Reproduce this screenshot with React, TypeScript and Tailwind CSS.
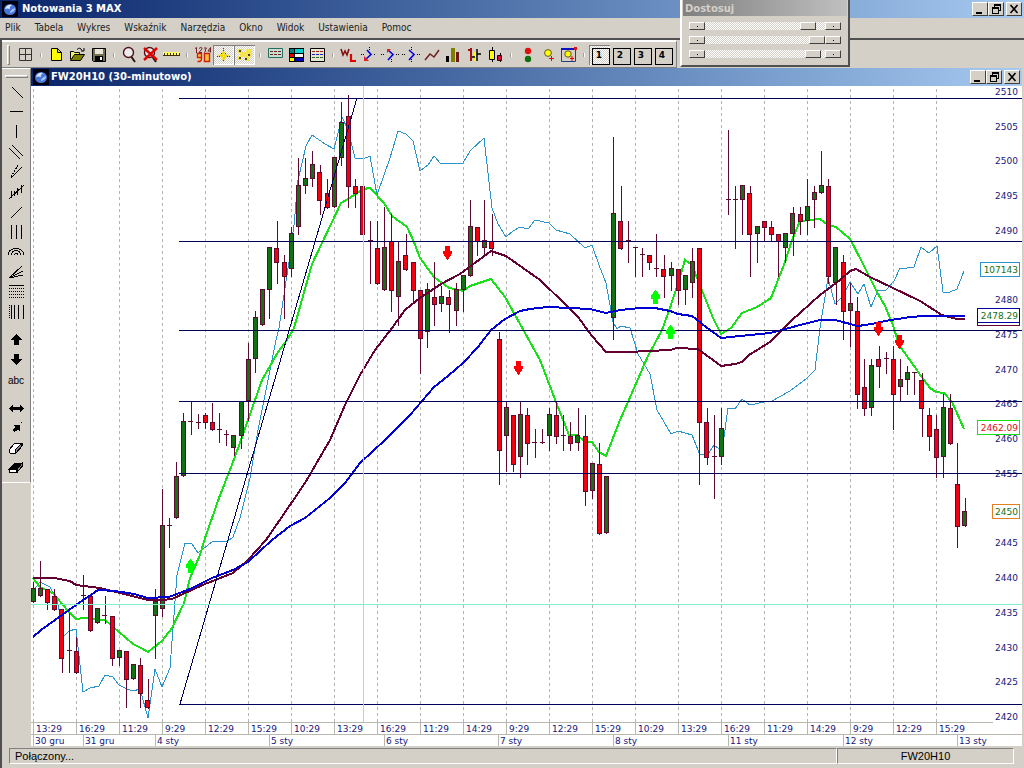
import React, { useState } from "react";

type Candle = [number, number, number, number, "u" | "d" | "-"];

// high, body top, body bottom, low, direction
const candles: Candle[] = [
  [582, 588, 602, 602, "u"], [561, 588, 596, 596, "u"], [589, 589, 603, 609, "d"], [589, 596, 610, 610, "d"],
  [609, 609, 659, 672, "d"], [613, 650, 650, 672, "-"], [637, 651, 673, 673, "d"], [575, 595, 595, 609, "-"],
  [596, 596, 631, 631, "d"], [608, 608, 623, 623, "u"], [596, 615, 615, 623, "-"], [616, 616, 659, 665, "d"],
  [650, 650, 658, 665, "u"], [651, 651, 680, 707, "d"], [664, 664, 679, 679, "u"], [658, 665, 694, 707, "d"],
  [679, 700, 708, 708, "d"], [589, 601, 616, 658, "u"], [489, 525, 609, 616, "u"], [518, 525, 525, 547, "-"],
  [462, 476, 518, 518, "u"], [413, 421, 476, 476, "u"], [401, 421, 421, 434, "-"], [414, 422, 422, 428, "-"],
  [413, 415, 423, 428, "d"], [403, 422, 430, 430, "d"], [413, 429, 429, 442, "-"], [430, 434, 434, 445, "-"],
  [435, 435, 448, 455, "u"], [401, 401, 436, 448, "u"], [343, 359, 401, 420, "u"], [311, 317, 359, 372, "u"],
  [289, 289, 325, 325, "u"], [247, 247, 290, 318, "u"], [221, 248, 263, 283, "d"], [255, 262, 277, 318, "d"],
  [227, 233, 269, 276, "u"], [158, 185, 227, 234, "u"], [158, 178, 186, 193, "u"], [151, 164, 179, 186, "u"],
  [165, 172, 201, 214, "d"], [179, 193, 208, 208, "d"], [157, 157, 207, 207, "u"], [102, 122, 158, 165, "u"],
  [95, 116, 187, 207, "d"], [179, 186, 194, 207, "d"], [172, 186, 235, 241, "d"], [221, 240, 240, 283, "-"],
  [221, 248, 284, 284, "d"], [207, 247, 290, 290, "u"], [214, 241, 291, 311, "d"], [242, 261, 297, 325, "u"],
  [234, 255, 270, 270, "d"], [262, 262, 291, 301, "d"], [290, 290, 339, 373, "d"], [283, 289, 332, 347, "u"],
  [262, 297, 305, 325, "d"], [286, 296, 304, 311, "u"], [290, 297, 305, 332, "d"], [283, 289, 311, 325, "u"],
  [275, 275, 290, 311, "u"], [200, 226, 276, 276, "u"], [227, 227, 242, 255, "d"], [200, 240, 248, 255, "u"],
  [214, 241, 249, 255, "d"], [332, 339, 451, 484, "d"], [402, 407, 436, 471, "u"], [415, 415, 465, 471, "d"],
  [402, 414, 457, 477, "u"], [408, 415, 444, 464, "d"], [429, 442, 442, 457, "-"], [429, 442, 442, 443, "-"],
  [408, 414, 436, 450, "u"], [402, 415, 437, 443, "d"], [415, 435, 435, 450, "-"], [422, 436, 444, 450, "d"],
  [408, 435, 443, 450, "u"], [415, 436, 492, 505, "d"], [463, 463, 491, 498, "u"], [443, 464, 534, 534, "d"],
  [476, 476, 533, 533, "u"], [137, 213, 318, 339, "u"], [186, 221, 249, 249, "d"], [221, 240, 240, 262, "-"],
  [247, 247, 247, 276, "-"], [248, 254, 254, 276, "-"], [255, 255, 263, 269, "d"], [234, 268, 268, 276, "-"],
  [255, 269, 277, 297, "d"], [262, 268, 276, 290, "u"], [269, 269, 291, 304, "d"], [275, 275, 290, 304, "u"],
  [248, 261, 283, 297, "u"], [248, 248, 423, 484, "d"], [408, 422, 458, 464, "d"], [415, 456, 456, 498, "-"],
  [408, 428, 457, 464, "u"], [130, 199, 199, 214, "-"], [186, 199, 199, 248, "-"], [185, 185, 200, 234, "u"],
  [186, 193, 235, 276, "d"], [226, 226, 234, 262, "u"], [221, 221, 228, 241, "d"], [221, 227, 235, 241, "d"],
  [234, 234, 242, 276, "d"], [233, 233, 248, 262, "u"], [207, 213, 234, 255, "u"], [207, 214, 222, 234, "d"],
  [179, 206, 221, 234, "u"], [186, 192, 200, 227, "u"], [151, 185, 193, 193, "u"], [179, 186, 277, 283, "d"],
  [247, 247, 283, 304, "u"], [255, 262, 312, 339, "d"], [283, 303, 311, 346, "u"], [297, 311, 395, 408, "d"],
  [359, 387, 409, 415, "d"], [359, 365, 408, 415, "u"], [346, 359, 367, 387, "d"], [352, 358, 358, 373, "-"],
  [346, 359, 395, 429, "d"], [359, 379, 387, 401, "u"], [366, 372, 380, 394, "u"], [372, 372, 372, 394, "-"],
  [373, 380, 409, 436, "d"], [408, 415, 437, 450, "d"], [415, 429, 458, 477, "d"], [394, 407, 457, 477, "u"],
  [394, 408, 444, 444, "d"], [443, 484, 527, 547, "d"], [498, 511, 526, 526, "u"],
];

const greenLine =
  "33,578 40,587 54,594 62,604 69,612 76,619 84,618 105,620 112,626 126,638 133,644 141,648 148,652 162,641 172,628 184,603 190,578 200,555 205,538 219,498 233,462 241,440 262,380 278,352 287,340 294,328 312,264 341,203 348,199 363,189 370,188 384,203 392,216 407,227 414,242 420,258 434,277 449,288 455,289 463,291 470,286 491,279 505,297 520,324 540,360 556,402 569,435 577,435 584,441 592,442 599,452 606,456 620,420 628,402 648,356 662,330 670,308 678,283 685,260 692,265 699,283 713,318 721,334 731,328 742,313 757,307 771,298 785,262 792,240 800,221 820,219 828,225 836,227 850,239 862,262 877,292 885,306 893,325 899,345 914,366 921,376 930,388 936,392 944,393 952,402 964,429";
const maroonLine =
  "33,578 54,578 70,581 76,585 100,588 148,600 162,600 172,599 205,584 233,573 248,560 266,540 290,505 305,483 330,440 345,405 360,375 375,350 392,328 405,310 420,298 441,284 460,274 491,251 506,256 540,280 565,304 578,317 592,336 606,352 628,352 670,350 677,348 698,349 721,366 735,364 742,362 749,355 770,342 792,320 800,313 820,295 840,280 850,271 856,269 870,277 893,288 920,301 942,315 957,319 965,319";
const blueLine =
  "33,637 41,630 55,620 62,615 76,605 98,590 115,591 134,594 148,598 169,597 190,589 212,578 233,570 248,562 272,540 290,526 305,518 330,498 345,483 360,463 385,440 410,415 434,387 448,376 463,363 478,347 491,330 505,319 520,311 530,309 548,307 590,309 606,313 620,310 640,308 655,308 670,311 678,314 692,316 706,327 721,338 740,336 770,333 778,331 800,325 820,320 835,320 858,326 872,324 885,321 910,317 925,316 965,316";
const volumeLine =
  "34,590 40,582 50,587 57,600 64,636 69,631 76,629 83,692 90,688 99,686 105,675 113,677 119,685 127,689 133,691 140,689 148,718 155,669 162,687 170,668 177,575 185,543 192,544 198,553 213,541 228,541 233,537 240,518 250,478 258,430 268,380 276,340 279,328 290,255 294,225 298,180 306,146 312,135 325,144 334,149 342,117 348,130 355,158 363,159 370,156 377,195 390,158 398,131 406,134 413,141 420,171 428,165 434,156 441,164 463,163 470,151 484,138 492,208 498,224 506,237 513,231 520,227 528,229 535,220 549,223 556,230 570,234 585,248 592,245 599,265 606,283 613,322 617,329 621,326 630,328 638,354 650,374 657,410 671,434 678,431 692,435 700,455 708,454 714,445 722,451 724,437 728,408 735,409 742,399 750,405 764,402 772,401 790,391 807,378 815,370 820,328 828,278 835,304 843,296 850,282 858,294 864,284 871,307 878,290 886,290 894,281 900,268 907,268 914,267 921,247 929,253 937,246 943,292 950,292 957,289 964,271";

const times = [
  "13:29", "16:29", "11:29", "9:29", "12:29", "15:29", "10:29", "13:29", "16:29", "11:29", "14:29",
  "9:29", "12:29", "15:29", "10:29", "13:29", "16:29", "11:29", "14:29", "9:29", "12:29", "15:29",
];

const dates = [
  { x: 33, label: "30 gru" },
  { x: 83, label: "31 gru" },
  { x: 155, label: "4 sty" },
  { x: 269, label: "5 sty" },
  { x: 384, label: "6 sty" },
  { x: 498, label: "7 sty" },
  { x: 613, label: "8 sty" },
  { x: 728, label: "11 sty" },
  { x: 843, label: "12 sty" },
  { x: 957, label: "13 sty" },
];

const lastPrice = 2450;
const prices = Array.from({ length: 19 }, (_, i) => 2510 - i * 5);
const levels = [98, 241, 330, 401, 473, 704];

const marks = [
  { x: 190, y: 559, up: true },
  { x: 655, y: 290, up: true },
  { x: 670, y: 325, up: true },
  { x: 447, y: 246, up: false },
  { x: 518, y: 361, up: false },
  { x: 878, y: 322, up: false },
  { x: 899, y: 335, up: false },
];

const PriceTag = ({ x, y, border, color, text }: { x: number; y: number; border: string; color: string; text: string }) => (
  <g>
    <rect x={x + 0.5} y={y + 0.5} width={1019 - x} height={14} fill="#fff" stroke={border} />
    <text x={1018} y={y + 11} textAnchor="end" fill={color}>
      {text}
    </text>
  </g>
);

const Chart = () => (
  <svg
    viewBox="31 86 991 660"
    className="block w-full bg-white font-['DejaVu_Sans',sans-serif] text-[9px]"
    shapeRendering="crispEdges"
    role="img"
    aria-label="FW20H10"
  >
    {/* time grid */}
    {times.map((t, i) => (
      <g key={i}>
        <line x1={33.5 + i * 43} x2={33.5 + i * 43} y1="89" y2="722" stroke="#b4b4b4" strokeDasharray="3 3" />
        <line x1={33.5 + i * 43} x2={33.5 + i * 43} y1="722" y2="734" stroke="#b8b8b0" />
        <text x={36 + i * 43} y="732" fill="#16167c">
          {t}
        </text>
      </g>
    ))}
    <path d="M31 722.5H993M31 734.5H1022" stroke="#b8b8b0" />
    {dates.map((d) => (
      <g key={d.label}>
        <line x1={d.x + 0.5} x2={d.x + 0.5} y1="734" y2="746" stroke="#b8b8b0" />
        <text x={d.x + 2} y="744" fill="#16167c">
          {d.label}
        </text>
      </g>
    ))}

    {/* price scale, the last price has its own tag */}
    {prices.map(
      (p, i) =>
        p !== lastPrice && (
          <text key={p} x="1018" y={95 + Math.round(i * 34.72)} textAnchor="end" fill="#16167c">
            {p}
          </text>
        )
    )}

    <polyline points={volumeLine} fill="none" stroke="#2b93cc" />
    <polyline points={greenLine} fill="none" stroke="#16e016" strokeWidth="2" />

    {/* candles */}
    {candles.map(([high, top, bottom, low, dir], i) => {
      const step = (i * 43) / 6;
      const wick = Math.floor(33.4 + step);
      const body = Math.floor(31.3 + step);
      return (
        <g key={i}>
          <rect x={wick} y={high} width="1" height={low - high + 1} fill="#5c0a30" />
          {dir === "-" ? (
            <rect x={body} y={top} width="5" height="1" fill="#5c0a30" />
          ) : (
            <>
              <rect x={body} y={top} width="5" height={bottom - top} fill="#5c0a30" />
              <rect x={body + 1} y={top + 1} width="3" height={bottom - top - 2} fill={dir === "u" ? "#147014" : "#f00010"} />
            </>
          )}
        </g>
      );
    })}

    <polyline points={maroonLine} fill="none" stroke="#640032" strokeWidth="2" />
    <polyline points={blueLine} fill="none" stroke="#0000d0" strokeWidth="2" />

    {/* support levels and trend */}
    {levels.map((y) => (
      <rect key={y} x="179" y={y} width="843" height="1" fill="#00005a" />
    ))}
    <line x1="180" y1="704" x2="357" y2="98" stroke="#00005a" />

    {/* crosshair */}
    <rect x="363" y="86" width="1" height="636" fill="#7ff0cc" />
    <rect x="31" y="604" width="991" height="1" fill="#7ff0cc" />

    {marks.map((m) => (
      <path
        key={m.x}
        transform={`translate(${m.x} ${m.y})`}
        d={m.up ? "M0 0H1L5 6V9H3V14H-2V9H-4V6Z" : "M-2 0H3V5H5V7L1 14H0L-4 7V5H-2Z"}
        fill={m.up ? "#00ff00" : "#ff0000"}
      />
    ))}

    <rect x="977.5" y="308.5" width="42" height="17" fill="#fff" stroke="#640032" />
    <PriceTag x={977} y={308} border="#0000a0" color="#147014" text="2478.29" />
    <PriceTag x={980} y={262} border="#2b93cc" color="#147014" text="107143" />
    <PriceTag x={977} y={420} border="#16e016" color="#e01010" text="2462.09" />
    <PriceTag x={992} y={504} border="#e08020" color="#147014" text={String(lastPrice)} />
  </svg>
);

const Logo = () => (
  <svg viewBox="0 0 16 16" className="size-4 shrink-0">
    <rect width="16" height="16" fill="#000010" />
    <ellipse cx="8" cy="8.5" rx="6" ry="5.5" fill="#4a78d8" />
    <path d="M3 8Q5 3 10 4Q7 6 8 8Q5 7 3 8Z" fill="#d8e8ff" />
    <path d="M8 12Q8 9 13 7Q13 11 8 12Z" fill="#a8c4f8" />
  </svg>
);

const bevel = "border border-t-white border-l-white border-r-[#404040] border-b-[#404040] bg-[#d4d0c8]";
const caption = "font-['DejaVu_Sans',sans-serif] text-[10px] font-bold";

const WindowButtons = () => (
  <div className="ml-auto flex items-center">
    <button aria-label="Minimalizuj" className={`h-[14px] w-4 ${bevel}`}>
      <svg viewBox="0 0 14 12" className="block w-full">
        <path d="M3 9H9V11H3Z" />
      </svg>
    </button>
    <button aria-label="Przywróć" className={`h-[14px] w-4 ${bevel}`}>
      <svg viewBox="0 0 14 12" className="block w-full" shapeRendering="crispEdges">
        <path d="M5.5 4V2.5H11.5V7.5H9M5 1.5H12M3.5 5.5H9.5V10.5H3.5ZM3 4.5H10" fill="none" stroke="#000" />
      </svg>
    </button>
    <button aria-label="Zamknij" className={`ml-0.5 h-[14px] w-4 ${bevel}`}>
      <svg viewBox="0 0 14 12" className="block w-full">
        <path d="M3.5 2L10.5 10M10.5 2L3.5 10" stroke="#000" strokeWidth="1.6" />
      </svg>
    </button>
  </div>
);

const magnifier = (
  <>
    <circle cx="9.5" cy="7.5" r="5" fill="#ececec" stroke="#501018" strokeWidth="1.4" />
    <path d="M12.5 12L16 17" stroke="#301010" strokeWidth="2" />
  </>
);

// 21x20 drawings for the main toolbar
const tools: { name: string; pressed?: boolean; icon: React.ReactNode }[][] = [
  [{ name: "Tabela", icon: <path d="M4.5 3.5H16.5V15.5H4.5ZM10.5 4V15M5 9.5H16" fill="none" stroke="#333" /> }],
  [
    { name: "Nowy", icon: <path d="M5.5 3.5H11.5L15.5 7.5V15.5H5.5ZM11.5 3.5V7.5H15.5" fill="#ffff00" stroke="#000" /> },
    {
      name: "Otwórz",
      icon: (
        <>
          <path d="M3.5 14.5V6.5H6.5L7.5 7.5H12.5V9.5" fill="#f0f060" stroke="#000" />
          <path d="M3.5 15.5L7.5 9.5H17.5L13.5 15.5Z" fill="#808000" stroke="#000" />
          <path d="M10 4.5Q13 1.5 15 5.5M17 3V6H14" fill="none" stroke="#000" />
        </>
      ),
    },
    {
      name: "Zapisz",
      icon: (
        <>
          <path d="M4.5 3.5H17.5V16.5H5.5L4.5 15.5Z" fill="#707050" stroke="#000" />
          <path d="M7 4H15V9H7Z" fill="#e8e4d8" />
          <path d="M7 11H15V16H7Z" fill="#000" />
          <path d="M12 12H14V15H12Z" fill="#fff" />
        </>
      ),
    },
  ],
  [
    { name: "Powiększ", icon: magnifier },
    {
      name: "Bez powiększenia",
      icon: (
        <>
          {magnifier}
          <path d="M4 3L17 15M17 3L4 15" stroke="#e00000" strokeWidth="2.4" />
        </>
      ),
    },
    {
      name: "Linijka",
      icon: (
        <>
          <path d="M2 7H19V11H2Z" fill="#ffff60" />
          <path d="M2 10.5H19M3.5 8V10M6.5 8V10M9.5 8V10M12.5 8V10M15.5 8V10M18.5 8V10" stroke="#403000" />
        </>
      ),
    },
  ],
  [
    {
      name: "Wartości",
      icon: (
        <>
          <path d="M3 3.5L4.5 2.5V8M7 3.5Q10 1 10 4L7 7.5H10M12 3H14.5L13 5Q15 6 12 7.5M18.5 7.5V2.5L16 6H19" fill="none" stroke="#702020" />
          <path
            d="M9.5 9.5V12.5H5.5V8.5H9.5V14Q9.5 17 5.5 16.5M12.5 8.5H17.5V16.5H12.5Z"
            fill="#ffc030"
            stroke="#d02010"
            strokeWidth="1.4"
          />
        </>
      ),
    },
    {
      name: "Celownik",
      pressed: true,
      icon: (
        <>
          <path d="M10.5 4L12.5 9.5H8.5ZM10.5 17L12.5 12H8.5ZM4.5 10.5L10 8.5V12.5ZM16.5 10.5L11 8.5V12.5Z" fill="#f0d800" />
          <path d="M10.5 3V6M10.5 15V17M4 11.5H7M14 11.5H17M8 8.5H9M12 8.5H13" stroke="#604000" strokeDasharray="1 1" />
        </>
      ),
    },
    {
      name: "Punkty",
      pressed: true,
      icon: (
        <>
          <path d="M3 4H8V7H12V4H18V12H15V16H11V12H7V15H3V11H6V8H3Z" fill="#f4e450" />
          <path d="M5 5H7V7H5ZM14 9H16V11H14ZM5 12H7V14H5ZM11 13H13V15H11Z" fill="#504000" />
        </>
      ),
    },
  ],
  [
    {
      name: "Opis",
      icon: (
        <>
          <path d="M3.5 3.5H17.5V12.5H3.5Z" fill="#c8dcd0" stroke="#207060" />
          <path d="M5 6.5H16M5 9.5H16" stroke="#702020" strokeDasharray="3 1" />
        </>
      ),
    },
    {
      name: "Kolory",
      icon: (
        <>
          <path d="M3 3H18V17H3Z" fill="#000" />
          <path d="M4 4H8V8H4Z" fill="#008080" />
          <path d="M9 4H17V8H9Z" fill="#00d0d0" />
          <path d="M4 9H8V12H4Z" fill="#e00000" />
          <path d="M9 9H17V12H9Z" fill="#f8f8f0" />
          <path d="M4 13H8V16H4Z" fill="#ffff00" />
          <path d="M9 13H17V16H9Z" fill="#0000b0" />
        </>
      ),
    },
    {
      name: "Lista",
      icon: (
        <>
          <path d="M3.5 3.5H17.5V16.5H3.5Z" fill="#e8e4d0" stroke="#000" />
          <path d="M5 6.5H16" stroke="#a02020" strokeDasharray="3 1" />
          <path d="M5 9.5H16" stroke="#2020c0" strokeDasharray="3 1" />
          <path d="M5 12.5H16" stroke="#207020" strokeDasharray="3 1" />
        </>
      ),
    },
  ],
  [
    {
      name: "Wykres WL",
      icon: (
        <>
          <path d="M3 4L5 10L7 6L9 10L11 4" fill="none" stroke="#801010" strokeWidth="1.6" />
          <path d="M13 9V16H18" fill="none" stroke="#e00000" strokeWidth="2.2" />
        </>
      ),
    },
    {
      name: "Trend 1",
      icon: (
        <>
          <path d="M2 9.5H5M15 9.5H17M10.5 2V5" stroke="#000" strokeDasharray="1 1" />
          <path d="M8 5L12 9.5L7 14" fill="none" stroke="#0000e0" strokeWidth="1.6" />
          <path d="M5 11V16H10Z" fill="#e02020" />
        </>
      ),
    },
    {
      name: "Trend 2",
      icon: (
        <>
          <path d="M1 9.5H4M16 9.5H20M11.5 14V17" stroke="#000" strokeDasharray="1 1" />
          <path d="M8 5L13 9.5L8 15" fill="none" stroke="#0000e0" strokeWidth="1.6" />
          <path d="M7 4H11L7 8Z" fill="#e02020" />
        </>
      ),
    },
    {
      name: "Trend 3",
      icon: (
        <>
          <path d="M1 9.5H4M16 9.5H20M10.5 2V5M10.5 14V17" stroke="#000" strokeDasharray="1 1" />
          <path d="M8 5L13 9.5L8 15" fill="none" stroke="#0000e0" strokeWidth="1.6" />
        </>
      ),
    },
    { name: "Liniowy", icon: <path d="M3 15L8 9L12 12L17 5" fill="none" stroke="#702020" strokeWidth="1.5" /> },
    {
      name: "Słupkowy",
      icon: (
        <>
          <path d="M3 11H6V17H3Z" fill="#000" />
          <path d="M8 3H12V17H8Z" fill="#808000" />
          <path d="M13 7H16V17H13Z" fill="#701818" />
        </>
      ),
    },
    {
      name: "OHLC",
      icon: (
        <>
          <path d="M7 3V16M4 5H8" stroke="#a01010" strokeWidth="2" />
          <path d="M10 7H12V16H10Z" fill="#ffff00" />
          <path d="M13 4V16M13 9H17M8 12H11" stroke="#000" strokeWidth="1.5" />
        </>
      ),
    },
    {
      name: "Świecowy",
      icon: (
        <>
          <path d="M7.5 2V17M15.5 8V17" stroke="#000" />
          <path d="M4.5 5.5H9.5V14.5H4.5Z" fill="#ffff00" stroke="#000" />
          <path d="M12.5 10.5H16.5V15.5H12.5Z" fill="#d01030" stroke="#300" />
        </>
      ),
    },
  ],
  [
    {
      name: "Sygnały",
      icon: (
        <>
          <circle cx="12" cy="6" r="3.2" fill="#e01010" />
          <circle cx="12" cy="14" r="3.2" fill="#107010" />
        </>
      ),
    },
    {
      name: "Dodaj",
      icon: (
        <>
          <circle cx="11" cy="8" r="3.4" fill="#ffff00" stroke="#605020" />
          <path d="M12 13.5H17M14.5 11V16" stroke="#e00000" />
        </>
      ),
    },
    {
      name: "Dodaj okno",
      icon: (
        <>
          <path d="M3.5 3.5H17.5V16.5H3.5Z" fill="none" stroke="#204080" />
          <path d="M3 3H16V5H3Z" fill="#1010c0" />
          <path d="M16 2H19V5H16Z" fill="#e01010" />
          <circle cx="10" cy="9" r="3.2" fill="#ffff00" stroke="#605020" />
          <path d="M12 13.5H16M14 11V16" stroke="#e00000" />
        </>
      ),
    },
  ],
];

const line = { fill: "none", stroke: "#000" };

// 20x20 drawings for the side toolbar
const drawTools: { name: string; icon: React.ReactNode }[][] = [
  [
    { name: "Linia", icon: <path d="M6 5L17 16" {...line} /> },
    { name: "Pozioma", icon: <path d="M4 9.5H17" {...line} /> },
    { name: "Pionowa", icon: <path d="M10.5 3V16" {...line} /> },
    { name: "Równoległe", icon: <path d="M3 6L14 17M6 3L17 14" {...line} /> },
    {
      name: "Wachlarz",
      icon: (
        <>
          <path d="M5 16L16 5" {...line} />
          <path d="M5 15L12 3" {...line} strokeDasharray="2 1" />
        </>
      ),
    },
    { name: "Fala", icon: <path d="M3 17L18 3M5.5 9V16M8.5 9V14M11.5 6V13M15.5 3V11" {...line} /> },
    { name: "Promień", icon: <path d="M5 16L16 5" {...line} /> },
    { name: "Cykle", icon: <path d="M5.5 3V17M10.5 3V17M15.5 3V17" {...line} /> },
    {
      name: "Łuki",
      icon: <path d="M2.5 13V11A8 7 0 0 1 17.5 11V13M5.5 13A4.5 4.5 0 0 1 14.5 13M8.5 13A1.5 1.5 0 0 1 11.5 13" {...line} />,
    },
    { name: "Linie Gann", icon: <path d="M3 16L16 4M3 16L17 9M3 16L17 13" {...line} /> },
    {
      name: "Fibonacci",
      icon: (
        <>
          <path d="M3 3.5H18" {...line} />
          <path d="M3 6.5H18M3 9.5H18M3 12.5H18M3 15.5H18" {...line} strokeDasharray="1 1" />
        </>
      ),
    },
    {
      name: "Strefy czasu",
      icon: (
        <>
          <path d="M3.5 3V17" {...line} strokeDasharray="1 1" />
          <path d="M5.5 3V17M8.5 3V17M12.5 3V17M17.5 3V17" {...line} />
        </>
      ),
    },
  ],
  [
    { name: "Strzałka w górę", icon: <path d="M10.5 4L16 10H13V15H8V10H5Z" /> },
    { name: "Strzałka w dół", icon: <path d="M8 4H13V9H16L10.5 15L5 9H8Z" /> },
    {
      name: "Tekst",
      icon: (
        <text x="10" y="14" textAnchor="middle" className="font-['Liberation_Sans',sans-serif] text-[10px]">
          abc
        </text>
      ),
    },
  ],
  [
    { name: "Przesuń", icon: <path d="M3 10.5L7 6V9H14V6L18 10.5L14 15V12H7V15Z" /> },
    {
      name: "Wskaż",
      icon: (
        <>
          <path d="M7 7H14V13H13L12 12L8 14L7 12L9 9Z" />
          <path d="M15 4H16V5H15Z" />
        </>
      ),
    },
    {
      name: "Gumka",
      icon: (
        <>
          <path d="M3 12L9 5H16V8L10 15H4Z" fill="#fff" stroke="#000" />
          <path d="M9 12L15 6L16 8L10 15Z" fill="#888" stroke="#000" />
        </>
      ),
    },
    {
      name: "Usuń wszystko",
      icon: (
        <>
          <path d="M3 11L9 5H16L11 11Z" stroke="#000" />
          <path d="M3.5 11.5H10.5V14.5H3.5Z" fill="#fff" stroke="#000" />
          <path d="M11 14.5V11L16 5V8.5Z" fill="#888" stroke="#000" />
        </>
      ),
    },
  ],
];

const menu = ["Plik", "Tabela", "Wykres", "Wskaźnik", "Narzędzia", "Okno", "Widok", "Ustawienia", "Pomoc"];

const dither = "bg-[repeating-conic-gradient(#ffffff_0_25%,#d4d0c8_0_50%)] bg-[length:2px_2px]";

const AdjustWindow = () => {
  const [values, setValues] = useState([91, 100, 96]);
  const change = (i: number, v: number) => setValues(values.map((old, k) => (k === i ? v : old)));

  return (
    <section className="absolute top-0 right-[174px] h-[67px] w-[170px] border-2 border-t-0 border-t-white border-r-[#505050] border-b-[#505050] border-l-white bg-[#d4d0c8] px-px">
      <h2 className={`h-4 bg-linear-to-r from-[#808080] to-[#c0c0c0] pl-0.5 leading-[17px] text-[#d4d0c8] ${caption}`}>Dostosuj</h2>
      <div className="mt-1.5 flex flex-col gap-1.5 px-1.5">
        {values.map((v, i) => (
          <div key={i} className="flex h-2">
            <button aria-label="Mniej" onClick={() => change(i, v - 1)} className={`flex w-4 items-center justify-center ${bevel}`}>
              <span className="size-px bg-black" />
            </button>
            <input
              type="range"
              aria-label={`Parametr ${i + 1}`}
              value={v}
              onChange={(e) => change(i, Number(e.target.value))}
              className={`h-2 min-w-0 flex-1 appearance-none ${dither} [&::-webkit-slider-thumb]:h-2 [&::-webkit-slider-thumb]:w-4 [&::-webkit-slider-thumb]:appearance-none [&::-webkit-slider-thumb]:border [&::-webkit-slider-thumb]:border-t-white [&::-webkit-slider-thumb]:border-r-[#404040] [&::-webkit-slider-thumb]:border-b-[#404040] [&::-webkit-slider-thumb]:border-l-white [&::-webkit-slider-thumb]:bg-[#d4d0c8]`}
            />
            <button aria-label="Więcej" onClick={() => change(i, v + 1)} className={`flex w-4 items-center justify-center ${bevel}`}>
              <span className="size-px bg-black" />
            </button>
          </div>
        ))}
      </div>
    </section>
  );
};

const App = () => {
  const [page, setPage] = useState(1);

  return (
    <div className="relative min-h-screen bg-[#d4d0c8] text-[11px] text-black">
      {/* Title bar */}
      <header className="flex h-[18px] items-center bg-linear-to-r from-[#0a246a] to-[#a6caf0] pr-0.5 pl-0.5">
        <Logo />
        <h1 className={`ml-1 leading-4 text-white ${caption}`}>Notowania 3 MAX</h1>
        <WindowButtons />
      </header>

      {/* Menu */}
      <nav className="flex h-5 items-center gap-3.5 pl-[5px] font-['DejaVu_Sans_Condensed','DejaVu_Sans',sans-serif] text-[10px] text-[#202020]">
        {menu.map((m) => (
          <button key={m} className="leading-4">
            {m}
          </button>
        ))}
      </nav>

      <div className="border-t-2 border-l-2 border-[#505050]">
        {/* Main toolbar */}
        <div className="flex h-7">
          <div className="flex items-center border-t-2 border-r border-b border-t-white border-r-[#808080] border-b-[#808080] pr-[3px] pl-[5px]">
            <span className={`mr-[5px] h-5 w-[3px] ${bevel} border-r-[#808080] border-b-[#808080]`} />
            {tools.map((group, g) => (
              <div key={g} className="flex items-center">
                {group.map((tool) => (
                  <button
                    key={tool.name}
                    aria-label={tool.name}
                    className={
                      tool.pressed
                        ? `h-5 w-[21px] shadow-[inset_1px_1px_0_#808080,inset_-1px_-1px_0_#ffffff] ${dither}`
                        : "h-5 w-[21px]"
                    }
                  >
                    <svg viewBox="0 0 21 20" className="block w-full">
                      {tool.icon}
                    </svg>
                  </button>
                ))}
                <span className="mx-1 h-1 w-0.5 border-r border-l border-r-white border-l-[#a0a0a0]" />
              </div>
            ))}
            {[1, 2, 3, 4].map((n) => (
              <button
                key={n}
                onClick={() => setPage(n)}
                className={
                  page === n
                    ? `flex h-5 w-[21px] items-end justify-end shadow-[inset_1px_1px_0_#808080,inset_-1px_-1px_0_#ffffff] ${dither}`
                    : "flex h-5 w-[21px] items-end justify-end"
                }
              >
                <span className="h-[17px] w-[18px] border border-black pr-1 font-['DejaVu_Sans',sans-serif] text-[9px] leading-[12px] font-bold">
                  {n}
                </span>
              </button>
            ))}
          </div>
        </div>

        <div className="flex">
          {/* Drawing tools */}
          <aside className="flex w-[29px] shrink-0 flex-col">
            <div className="flex flex-col items-center gap-2 border-t border-r border-b border-t-white border-r-[#808080] border-b-white pt-1.5 pb-1">
              <span className="-mb-1 h-[3px] w-[23px] border border-t-white border-r-[#808080] border-b-[#808080] border-l-white" />
              {drawTools.map((group, g) => (
                <div key={g} className="flex flex-col">
                  {group.map((tool) => (
                    <button key={tool.name} aria-label={tool.name} className="size-5">
                      <svg viewBox="0 0 20 20" className="block w-full" shapeRendering="crispEdges">
                        {tool.icon}
                      </svg>
                    </button>
                  ))}
                </div>
              ))}
            </div>
          </aside>

          {/* Chart window */}
          <main className="mr-0.5 min-w-0 flex-1">
            <div className="flex h-[18px] items-center bg-linear-to-r from-[#0a246a] to-[#a6caf0] pr-0.5 pl-0.5">
              <Logo />
              <h2 className={`ml-0.5 leading-4 text-white ${caption}`}>FW20H10 (30-minutowo)</h2>
              <WindowButtons />
            </div>
            <Chart />
          </main>
        </div>
      </div>

      {/* Status bar */}
      <footer className="flex h-[22px] border-l-2 border-[#505050] pt-0.5 pr-2.5 pb-1 pl-[7px] font-['Liberation_Sans',sans-serif]">
        <p className="flex-1 border border-t-[#808080] border-r-white border-b-white border-l-[#808080] pl-[5px] leading-[14px]">
          Połączony...
        </p>
        <p className="w-[177px] border border-t-[#808080] border-r-white border-b-white border-l-[#808080] text-center leading-[14px]">
          FW20H10
        </p>
      </footer>

      <AdjustWindow />
    </div>
  );
};

export default App;
